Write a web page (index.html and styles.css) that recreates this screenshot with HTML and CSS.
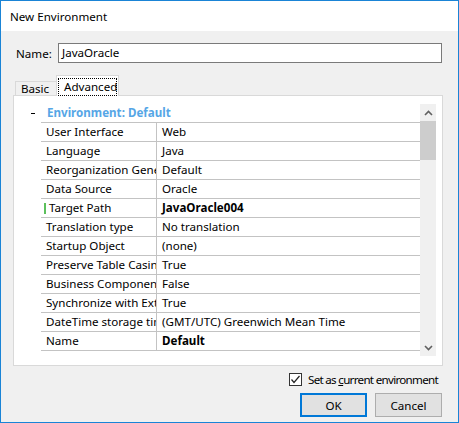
FILE: index.html
```html
<!DOCTYPE html>
<html>
<head>
<meta charset="utf-8">
<link rel="stylesheet" href="styles.css">
</head>
<body>
<div class="window">
  <div class="titlebar">New Environment</div>
  <div class="client">
    <div class="name-row">
      <label class="name-label">Name:</label>
      <div class="textbox">JavaOracle</div>
    </div>
    <div class="tabs">
      <div class="tab tab-basic">Basic</div>
      <div class="tab tab-adv"><span class="focus">Advanced</span></div>
    </div>
    <div class="panel">
      <div class="grid-area">
        <div class="cat-row"><span class="minus"></span><span class="cat-title">Environment: Default</span></div>
        <div class="grid">
          <div class="row"><div class="k">User Interface</div><div class="v">Web</div></div>
          <div class="row"><div class="k">Language</div><div class="v">Java</div></div>
          <div class="row"><div class="k">Reorganization Generation</div><div class="v">Default</div></div>
          <div class="row"><div class="k">Data Source</div><div class="v">Oracle</div></div>
          <div class="row sel"><div class="k">Target Path</div><div class="v b">JavaOracle004</div></div>
          <div class="row"><div class="k">Translation type</div><div class="v">No translation</div></div>
          <div class="row"><div class="k">Startup Object</div><div class="v">(none)</div></div>
          <div class="row"><div class="k">Preserve Table Casing</div><div class="v">True</div></div>
          <div class="row"><div class="k">Business Component</div><div class="v">False</div></div>
          <div class="row"><div class="k">Synchronize with External</div><div class="v">True</div></div>
          <div class="row"><div class="k">DateTime storage timezone</div><div class="v">(GMT/UTC) Greenwich Mean Time</div></div>
          <div class="row"><div class="k">Name</div><div class="v b">Default</div></div>
        </div>
      </div>
      <div class="scrollbar">
        <div class="sb-btn"><svg width="9" height="6" viewBox="0 0 9 6"><path d="M1 5 L4.5 1.5 L8 5" fill="none" stroke="#606060" stroke-width="1.6"/></svg></div>
        <div class="sb-thumb"></div>
        <div class="sb-track"></div>
        <div class="sb-btn"><svg width="9" height="6" viewBox="0 0 9 6"><path d="M1 1 L4.5 4.5 L8 1" fill="none" stroke="#606060" stroke-width="1.6"/></svg></div>
      </div>
    </div>
    <div class="check-row">
      <span class="checkbox"><svg width="11" height="11" viewBox="0 0 11 11"><path d="M1.5 5.5 L4 8.5 L9.5 2" fill="none" stroke="#222" stroke-width="1.2"/></svg></span>
      <span class="check-label">Set as <u>c</u>urrent environment</span>
    </div>
    <div class="buttons">
      <div class="btn btn-ok">OK</div>
      <div class="btn">Cancel</div>
    </div>
  </div>
</div>
</body>
</html>
```
FILE: styles.css
```css
* { box-sizing: border-box; }
html, body { margin: 0; padding: 0; background: #fff; }
body { font-family: "Noto Sans", "Segoe UI", sans-serif; font-size: 11.6px; color: #000; }

.window {
  width: 459px; height: 423px;
  border: 1px solid #1a84d6;
  display: flex; flex-direction: column;
  background: #f0f0f0;
}
.titlebar {
  height: 30px; background: #fff;
  padding-left: 9px;
  display: flex; align-items: center;
  line-height: 16px;
  padding-top: 1px;
}
.client { flex: 1; padding: 12px 0 0 12px; display: flex; flex-direction: column; }

.name-row { display: flex; align-items: center; height: 20px; }
.name-label { width: 45px; padding-left: 3px; }
.textbox {
  width: 384px; height: 20px;
  border: 1px solid #7a7a7a; background: #fff;
  padding-left: 3px; line-height: 17px;
}

.tabs { display: flex; align-items: flex-end; height: 20px; margin-top: 12px; padding-left: 2px; }
.tab { line-height: 13px; white-space: nowrap; }
.tab-basic {
  height: 14px; width: 41px;
  border: 1px solid #d9d9d9; border-right: none; border-bottom: none;
  padding-left: 5px;
}
.tab-adv {
  height: 21px; width: 63px;
  border: 1px solid #d9d9d9; border-bottom: none;
  background: #fff;
  margin-bottom: -1px;
  position: relative; z-index: 1;
  padding: 2px 0 0 1px;
}
.focus {
  display: block; width: 59px; height: 18px;
  outline: 1px dotted #000; outline-offset: -1px;
  padding: 1px 0 0 6px; line-height: 15px;
}

.panel {
  width: 430px; height: 271px;
  border: 1px solid #d9d9d9; background: #fff;
  display: flex;
  padding: 8px 6px 0 0;
}
.grid-area { width: 406px; }
.cat-row { height: 18px; display: flex; align-items: center; padding-left: 17px; }
.minus { width: 4px; height: 1px; background: #000; margin-right: 12px; margin-top: 1px; }
.cat-title { font-weight: bold; color: #56a6e6; line-height: 18px; }

.grid { margin-left: 27px; width: 379px; border-top: 1px solid #c3c3c3; }
.row { display: flex; height: 19px; border-bottom: 1px solid #c3c3c3; line-height: 18px; }
.k { width: 115px; padding-left: 5px; white-space: nowrap; overflow: hidden; position: relative; }
.v { flex: 1; border-left: 1px solid #c3c3c3; padding-left: 5px; white-space: nowrap; overflow: hidden; }
.b { font-weight: bold; }
.sel .k { padding-left: 8px; }
.sel .k::before {
  content: ""; position: absolute; left: 3px; top: 4px;
  width: 2px; height: 11px; background: #5cc05c;
}

.scrollbar { width: 16px; height: 252px; background: #f0f0f0; display: flex; flex-direction: column; }
.sb-btn { height: 17px; display: flex; align-items: center; justify-content: center; }
.sb-thumb { height: 39px; background: #cdcdcd; }
.sb-track { flex: 1; }

.check-row { display: flex; align-items: center; height: 13px; margin-top: 7px; padding-left: 276px; white-space: nowrap; }
.checkbox {
  width: 13px; height: 13px; border: 1px solid #333; background: #fff;
  display: flex; align-items: center; justify-content: center;
  margin-right: 6px; flex: none;
}
.check-label { line-height: 13px; letter-spacing: -0.7px; }

.buttons { display: flex; margin-top: 7px; padding-left: 287px; gap: 8px; }
.btn {
  width: 67px; height: 24px;
  border: 1px solid #adadad; background: #e1e1e1;
  display: flex; align-items: center; justify-content: center;
}
.btn-ok { border: 2px solid #0078d7; }
```
